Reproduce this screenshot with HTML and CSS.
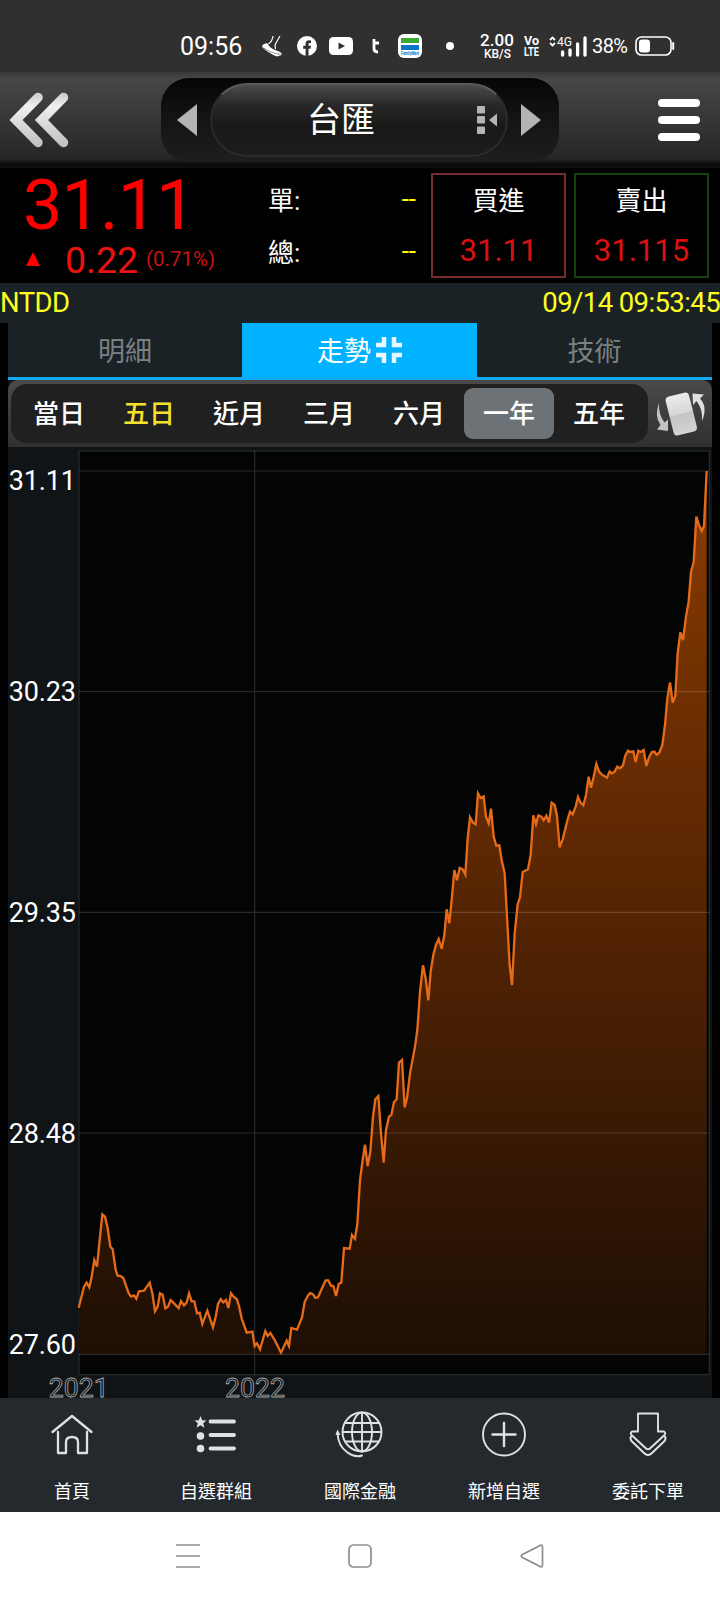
FILE: index.html
```html
<!DOCTYPE html>
<html lang="zh-Hant">
<head>
    <meta charset="UTF-8">
    <meta name="viewport" content="width=device-width, initial-scale=1.0">
    <title>台匯</title>
    <link rel="stylesheet" href="styles.css">
</head>
<body>
    <div class="status-bar">
        <span class="clock">09:56</span>
        <svg class="shoe" width="20" height="22" viewBox="0 0 20 22">
            <path d="M1 9.500 L5 8 Q8 13 12 14.500 L18 17 Q20 18 19.500 20 L15 21.500 Q6 18 0 12 Z" fill="#fff"/>
            <path d="M1 12.500 Q8 18 18.500 19.300" stroke="#777" stroke-width=".8" fill="none"/>
            <path d="M11 1 Q10.500 6 6.500 9 M18 1 Q15 6 13 10 L13.500 14" stroke="#fff" stroke-width="1.2" fill="none"/>
        </svg>
        <svg class="facebook" width="20" height="20" viewBox="0 0 20 20">
            <circle cx="10" cy="10" r="10" fill="#fff"/>
            <path d="M8.6 20 V12.8 H6.2 V9.7 H8.6 V7.8 Q8.6 4.2 12 4.2 L14 4.4 V7 H12.8 Q11.5 7 11.5 8.2 V9.7 H14 L13.5 12.8 H11.5 V20 Z" fill="#303030"/>
        </svg>
        <svg class="youtube" width="24" height="18" viewBox="0 0 24 18">
            <rect width="24" height="18" rx="4.5" fill="#fff"/>
            <path d="M9.5 5.4 L16 9 L9.5 12.6 Z" fill="#303030"/>
        </svg>
        <svg class="letter-t" width="8" height="16" viewBox="0 0 8 16">
            <path d="M2 1 V10.500 Q2 14 6 14 M2 5 H7" stroke="#fff" stroke-width="2.800" fill="none"/>
        </svg>
        <svg class="mart" width="24" height="24" viewBox="0 0 24 24">
            <rect width="24" height="24" rx="6" fill="#fff"/>
            <rect x="3" y="4" width="18" height="5" fill="#3aa935"/>
            <rect x="3" y="11" width="18" height="5" fill="#0b76c5"/>
            <text x="3" y="21.3" font-size="4.6" font-weight="700" textLength="18" lengthAdjust="spacingAndGlyphs" fill="#0b76c5">FamilyMart</text>
        </svg>
        <span class="dot"></span>
        <svg class="speed" width="34" height="26" viewBox="0 0 34 26">
            <text x="0" y="13" font-size="17" font-weight="500" textLength="34">2.00</text>
            <text x="4" y="25" font-size="12" font-weight="500" textLength="27" lengthAdjust="spacingAndGlyphs">KB/S</text>
        </svg>
        <svg class="volte" width="15" height="20" viewBox="0 0 15 20">
            <text x="0" y="9" font-size="12.500" font-weight="700" textLength="15" lengthAdjust="spacingAndGlyphs">Vo</text>
            <text x="0" y="19.500" font-size="12.500" font-weight="700" textLength="15" lengthAdjust="spacingAndGlyphs">LTE</text>
        </svg>
        <svg class="signal" width="38" height="21" viewBox="0 0 38 21">
            <path d="M1 4 L3.5 1.5 L6 4 M1 7 L3.5 9.5 L6 7" stroke="#fff" stroke-width="1.8" fill="none"/>
            <text x="8" y="10" font-size="13" textLength="15" lengthAdjust="spacingAndGlyphs">4G</text>
            <path d="M13.6 16 V19 M21 14 V19 M28.6 8 V19 M36 2 V19" stroke="#fff" stroke-width="3.300" stroke-linecap="round"/>
        </svg>
        <span class="percent">38%</span>
        <svg class="battery" width="40" height="20" viewBox="0 0 40 20">
            <rect x="1" y="1" width="35" height="18" rx="5.5" stroke="#fff" stroke-width="1.6" fill="none"/>
            <rect x="4" y="3.5" width="11" height="13" rx="3" fill="#fff"/>
            <path d="M38.2 7 V13" stroke="#fff" stroke-width="2" stroke-linecap="round"/>
        </svg>
    </div>

    <div class="toolbar">
        <svg class="back" width="60" height="56" viewBox="0 0 60 56">
            <defs>
                <linearGradient id="silver" x1="0" y1="0" x2="0" y2="56" gradientUnits="userSpaceOnUse">
                    <stop offset="0" stop-color="#c8c8c8"/>
                    <stop offset=".25" stop-color="#f0f0f0"/>
                    <stop offset="1" stop-color="#bdbdbd"/>
                </linearGradient>
            </defs>
            <path d="M28 5.500 L6 28 L28 50.500 M53.500 5.500 L31.500 28 L53.500 50.500" stroke="url(#silver)" stroke-width="9.500" stroke-linecap="round" fill="none"/>
        </svg>
        <div class="switcher">
            <svg width="20" height="32" viewBox="0 0 20 32"><path d="M20 0 V32 L0 16 Z" fill="#b4b4b4"/></svg>
            <div class="pill">
                <span>台匯</span>
                <svg class="more" width="21" height="30" viewBox="0 0 21 30">
                    <rect x="0" y="1" width="8" height="7.500" rx="1" fill="#b4b4b4"/>
                    <rect x="0" y="11" width="8" height="7.500" rx="1" fill="#b4b4b4"/>
                    <rect x="0" y="21.500" width="8" height="7.500" rx="1" fill="#b4b4b4"/>
                    <path d="M20 8.500 V21.500 L12 15 Z" fill="#b4b4b4"/>
                </svg>
            </div>
            <svg width="20" height="32" viewBox="0 0 20 32"><path d="M0 0 V32 L20 16 Z" fill="#b4b4b4"/></svg>
        </div>
        <div class="menu"><i></i><i></i><i></i></div>
    </div>

    <div class="quote">
        <div class="last">
            <div class="price">31.11</div>
            <div class="change">
                <span class="up"></span>
                <span class="diff">0.22</span>
                <span class="pct">(0.71%)</span>
            </div>
        </div>
        <div class="volume">
            <div><span>單:</span><em>--</em></div>
            <div><span>總:</span><em>--</em></div>
        </div>
        <div class="deal buy"><span>買進</span><b>31.11</b></div>
        <div class="deal sell"><span>賣出</span><b>31.115</b></div>
    </div>

    <div class="info">
        <span>NTDD</span>
        <span>09/14 09:53:45</span>
    </div>

    <div class="main">
        <div class="tabs">
            <div class="tab">明細</div>
            <div class="tab active">走勢
                <svg width="26" height="26" viewBox="0 0 26 26">
                    <path d="M8 0 V8 H0 M18 0 V8 H26 M0 18 H8 V26 M26 18 H18 V26" stroke="#e8f6ff" stroke-width="4.500" fill="none"/>
                </svg>
            </div>
            <div class="tab">技術</div>
        </div>

        <div class="period-bar">
            <div class="periods">
                <span>當日</span>
                <span class="yellow">五日</span>
                <span>近月</span>
                <span>三月</span>
                <span>六月</span>
                <span class="selected">一年</span>
                <span>五年</span>
            </div>
            <svg class="rotate" width="50" height="48" viewBox="0 0 50 48">
                <defs>
                    <linearGradient id="card" x1="0" y1="0" x2="0" y2="1">
                        <stop offset="0" stop-color="#ececec"/>
                        <stop offset=".5" stop-color="#d6d6d6"/>
                        <stop offset=".5" stop-color="#c4c4c4"/>
                        <stop offset="1" stop-color="#d4d4d4"/>
                    </linearGradient>
                </defs>
                <rect x="14.300" y="4" width="24" height="40" rx="4" transform="rotate(-14 26.300 24)" fill="url(#card)"/>
                <path d="M4 13 Q-1 26 5.500 35 L2 39.500 L13 41 L13 29.500 L9.500 32.500 Q3.500 25 4 13 Z" fill="#c4c4c4"/>
                <path d="M47 31 Q53 17 45 8.500 L49 4.500 L37.500 3.500 L38 15 L41.500 11 Q48 19 47 31 Z" fill="#e0e0e0"/>
            </svg>
        </div>

        <!-- chart units are thirds of a pixel -->
        <svg class="chart" viewBox="0 0 2112 2853">
            <defs>
                <linearGradient id="area" x1="0" y1="72" x2="0" y2="2722" gradientUnits="userSpaceOnUse">
                    <stop offset="0" stop-color="#8a3b00"/>
                    <stop offset=".5" stop-color="#552403"/>
                    <stop offset="1" stop-color="#1d0e04"/>
                </linearGradient>
            </defs>
            <rect class="plot" x="213" y="12" width="1891" height="2771"/>
            <path id="fill" fill="url(#area)"/>
            <path class="grid" d="M213 72 H2104 M213 734 H2104 M213 1396 H2104 M213 2058 H2104 M213 2722 H2104 M740 12 V2783"/>
            <polyline id="line" points="212,2582 228,2519 236,2507 244,2521 251,2489 259,2439 267,2459 274,2389 283,2302 291,2309 299,2344 307,2399 314,2407 323,2469 329,2486 338,2487 346,2493 362,2539 369,2549 378,2545 385,2555 393,2533 408,2531 425,2507 433,2539 441,2593 449,2579 456,2539 464,2543 472,2584 480,2579 488,2559 501,2572 512,2583 519,2562 528,2575 536,2567 543,2539 551,2563 559,2563 567,2599 575,2597 583,2631 598,2591 615,2641 623,2609 630,2571 638,2557 646,2566 654,2559 661,2583 669,2539 677,2549 686,2556 693,2577 701,2614 716,2657 733,2654 740,2697 747,2689 756,2707 772,2652 779,2667 787,2658 801,2681 819,2717
                836,2681 843,2697 850,2643 867,2648 882,2611 890,2565 900,2545 907,2538 915,2542 922,2553 930,2551 945,2517 953,2500 961,2500 969,2516 976,2517 984,2547 992,2511 1000,2507 1008,2403 1025,2405 1032,2364 1041,2375 1048,2331 1056,2199 1064,2139 1071,2093 1079,2157 1087,2114 1095,2009 1102,1957 1111,1947 1119,2059 1127,2147 1134,2049 1143,2009 1150,2004 1158,1965 1166,1957 1173,1847 1182,1839 1190,1981 1197,1954 1206,1879 1221,1799
                1228,1749 1236,1634 1245,1555 1253,1595 1261,1660 1268,1574 1276,1524 1284,1493 1292,1476 1301,1505 1309,1464 1316,1387 1324,1429 1332,1349 1339,1269 1347,1300 1355,1263 1364,1267 1372,1283 1379,1174 1386,1111 1395,1127 1403,1132 1410,1039 1418,1053 1427,1048 1434,1109 1442,1129 1449,1085 1457,1169 1465,1196 1474,1195 1481,1239 1490,1279 1497,1409 1505,1554 1512,1614 1520,1459 1529,1372 1536,1351 1544,1275 1560,1267 1568,1224 1576,1105 1584,1131 1591,1105 1600,1109 1607,1120 1615,1106 1623,1127 1631,1067 1640,1074 1647,1107 1655,1201
                1664,1177 1679,1117 1686,1094 1694,1102 1703,1079 1710,1050 1717,1066 1726,1075 1734,1044 1742,989 1749,1022 1757,989 1765,951 1773,974 1782,983 1797,992 1805,973 1812,979 1820,974 1828,959 1836,964 1845,955 1852,926 1860,911 1867,915 1876,913 1883,945 1891,911 1899,915 1907,909 1915,957 1923,931 1931,916 1939,914 1946,923 1954,917 1963,894 1971,834 1978,754 1986,706 1994,767 2002,746
                2009,619 2017,556 2025,579 2034,509 2042,464 2049,374 2057,346 2065,209 2073,234 2081,252 2088,237 2096,72"/>
            <g class="prices">
                <text x="203" y="130">31.11</text>
                <text x="203" y="763">30.23</text>
                <text x="203" y="1426">29.35</text>
                <text x="203" y="2087">28.48</text>
                <text x="203" y="2720">27.60</text>
            </g>
            <g class="years">
                <text x="212" y="2851">2021</text>
                <text x="741" y="2851">2022</text>
            </g>
        </svg>
    </div>

    <div class="bottom-nav">
        <div class="item">
            <svg width="48" height="48" viewBox="0 0 48 48">
                <path d="M4.500 21 L24 5 L43.500 21 M10 21 V42 H18 V31 Q18 26 24 26 Q30 26 30 31 V42 H39 V21" stroke-width="2.300"/>
            </svg>
            <span>首頁</span>
        </div>
        <div class="item">
            <svg width="48" height="48" viewBox="0 0 48 48">
                <path class="solid" d="M8.500 5 L10.200 9.200 L14.500 9.400 L11.200 12.200 L12.500 16.800 L8.500 14.200 L4.500 16.800 L5.800 12.200 L2.500 9.400 L6.800 9.200 Z"/>
                <circle class="solid" cx="8.500" cy="25" r="3.800"/>
                <circle class="solid" cx="8.500" cy="37.500" r="3.800"/>
                <path d="M18.500 10.500 H42 M18.500 24 H42 M18.500 37.500 H42" stroke-width="3.800"/>
            </svg>
            <span>自選群組</span>
        </div>
        <div class="item">
            <svg width="48" height="48" viewBox="0 0 48 48">
                <circle cx="26" cy="21" r="19.500"/>
                <ellipse cx="26" cy="21" rx="10" ry="19.500"/>
                <path d="M26 2 V40 M7 21 H45 M9.500 12 H42.500 M9.500 30.500 H42.500 M1.500 22 Q2 35 11.500 41.500 Q19 47 26 44.500"/>
                <path class="solid" d="M1.500 18.500 L4.500 24 H-.5 Z"/>
            </svg>
            <span>國際金融</span>
        </div>
        <div class="item">
            <svg width="48" height="48" viewBox="0 0 48 48">
                <circle cx="24" cy="23.500" r="21"/>
                <path d="M12.500 23.500 H35.500 M24 12 V35" stroke-width="2.400"/>
            </svg>
            <span>新增自選</span>
        </div>
        <div class="item">
            <svg width="48" height="48" viewBox="0 0 48 48">
                <path d="M14 2.500 H34 V20.500 H40 Q42.500 22 40 24.500 L26.500 37 Q24 39.500 21.500 37 L8 24.500 Q5.500 22 8 20.500 H14 Z"/>
                <path d="M7 25.500 Q5.500 28 8 30.500 L20 42 Q24 46 28 42 L40 30.500 Q42.500 28 41 25.500"/>
            </svg>
            <span>委託下單</span>
        </div>
    </div>

    <div class="system-nav">
        <svg width="24" height="24" viewBox="0 0 24 24"><path d="M0 1 H24 M0 12 H24 M0 23 H24"/></svg>
        <svg width="24" height="24" viewBox="0 0 24 24"><rect x="1" y="1" width="22" height="22" rx="4.500"/></svg>
        <svg width="24" height="24" viewBox="0 0 24 24"><path d="M20.500 1.300 L2 10.800 Q.4 12 2 13.200 L20.500 22.700 Q22.500 23.300 22.500 21 V3 Q22.500 .7 20.500 1.300 Z"/></svg>
    </div>

    <script>
        // Close the price line down to the base line for the shaded area
        const points = document.getElementById('line').getAttribute('points').trim();
        document.getElementById('fill').setAttribute('d', 'M212 2722 L' + points + ' V2722 Z');
    </script>
</body>
</html>
```

FILE: styles.css
```css
* {
    box-sizing: border-box;
}

body {
    margin: 0;
    width: 720px;
    height: 1600px;
    background: #000;
    color: #fff;
    font-family: Roboto, "Noto Sans CJK TC", sans-serif;
}

svg {
    display: block;
    flex-shrink: 0;
    overflow: visible;
}

/* phone status bar */
.status-bar {
    height: 72px;
    padding: 20px 0 0 180px;
    background: #303030;
    display: flex;
    align-items: center;
}

.status-bar text {
    fill: #fff;
}

.mart text {
    fill: #0b76c5;
}

.clock {
    width: 82px;
    font-size: 25px;
}

.facebook {
    margin-left: 15px;
}

.youtube {
    margin-left: 12px;
}

.letter-t {
    margin-left: 19px;
}

.mart {
    margin-left: 18px;
}

.dot {
    width: 8px;
    height: 8px;
    margin-left: 24px;
    border-radius: 50%;
    background: #fff;
}

.speed {
    margin-left: 26px;
}

.volte {
    margin-left: 10px;
}

.signal {
    margin-left: 10px;
}

.percent {
    width: 38px;
    margin-left: 5px;
    font-size: 20px;
    letter-spacing: -0.6px;
    white-space: nowrap;
}

.battery {
    margin-left: 5px;
}

/* title bar */
.toolbar {
    height: 96px;
    padding: 0 20px 0 10px;
    display: flex;
    align-items: center;
    background: linear-gradient(#3a3a3a, #474747 8%, #262626 90%, #080808 97%, #111);
}

.switcher {
    width: 398px;
    height: 84px;
    margin-left: 91px;
    padding: 0 18px 0 16px;
    display: flex;
    align-items: center;
    justify-content: space-between;
    border-radius: 28px;
    background: linear-gradient(#060606, #141414 50%, #1e1e1e);
}

.pill {
    width: 298px;
    height: 74px;
    display: flex;
    align-items: center;
    justify-content: flex-end;
    border-radius: 37px;
    border: 2px solid #2b2b2b;
    border-top-color: #5a5a5a;
    background: linear-gradient(#4c4c4c, #282828 28%, #191919 60%, #1c1c1c);
    font-size: 34px;
}

.pill span {
    margin-right: 102px;
    line-height: 1;
}

.more {
    margin-right: 8px;
}

.menu {
    width: 42px;
    margin-left: auto;
    display: flex;
    flex-direction: column;
    gap: 9px;
}

.menu i {
    height: 8px;
    border-radius: 4px;
    background: #fff;
}

/* quote */
.quote {
    height: 115px;
    padding-right: 11px;
    display: flex;
    align-items: center;
}

.last {
    width: 268px;
    height: 115px;
    color: #f00;
}

.price {
    height: 72px;
    padding: 3px 0 0 23px;
    font-size: 70px;
    line-height: 69px;
    letter-spacing: -0.8px;
}

.change {
    padding-left: 26px;
    display: flex;
    align-items: baseline;
    line-height: 41px;
}

.up {
    margin-right: 25px;
    border: 7.5px solid transparent;
    border-top: 0;
    border-bottom: 14px solid #f00;
    position: relative;
    top: -7px;
}

.diff {
    width: 81px;
    font-size: 37.5px;
    color: #ec1111;
}

.pct {
    font-size: 20.5px;
    color: #c81414;
    position: relative;
    top: -7px;
}

.volume {
    width: 148px;
    margin: -2px 15px 0 0;
    font-size: 26px;
}

.volume div {
    height: 52px;
    display: flex;
    align-items: center;
    justify-content: space-between;
}

.volume em {
    font-style: normal;
    color: #ffff00;
}

.deal {
    width: 135px;
    height: 105px;
    padding-top: 1px;
    border: 2px solid #762c2c;
    display: flex;
    flex-direction: column;
    align-items: center;
    font-size: 26px;
}

.deal span {
    line-height: 50px;
}

.deal b {
    font-size: 31px;
    font-weight: 400;
    line-height: 50px;
    color: #dd1010;
}

.sell {
    margin-left: 8px;
    border-color: #173f12;
}

.info {
    height: 40px;
    display: flex;
    justify-content: space-between;
    background: #1b2225;
    color: #ffff22;
    font-size: 27.5px;
    line-height: 39px;
    letter-spacing: -0.6px;
}

/* tabs and chart */
.main {
    margin: 0 8px;
    height: 1075px;
    background: #101417;
}

.tabs {
    height: 57px;
    display: grid;
    grid-template-columns: 234px 235px 235px;
    background: #1b2225;
    border-bottom: 3px solid #12aaf0;
}

.tab {
    padding-bottom: 1px;
    display: flex;
    align-items: center;
    justify-content: center;
    gap: 5px;
    color: #7b8183;
    font-size: 27px;
}

.tab.active {
    background: #00b2ff;
    color: #fff;
}

.period-bar {
    height: 67px;
    padding-left: 3px;
    display: flex;
    align-items: center;
    border-radius: 10px 10px 0 0;
    background: linear-gradient(#4a4a4a, #303030);
}

.periods {
    width: 637px;
    height: 59px;
    padding-left: 3px;
    display: grid;
    grid-template-columns: repeat(7, 90px);
    align-items: center;
    border-radius: 16px;
    background: #202020;
    font-size: 26px;
    font-weight: 500;
    text-align: center;
}

.periods span {
    height: 51px;
    padding-top: 2px;
    line-height: 49px;
    border-radius: 9px;
}

.periods .yellow {
    color: #f5e02c;
}

.periods .selected {
    background: #6d7276;
}

.rotate {
    margin-left: 7px;
}

.chart {
    width: 704px;
    height: 951px;
}

.plot {
    fill: #030504;
    stroke: #262929;
    stroke-width: 4;
}

.grid {
    fill: none;
    stroke: #fff;
    stroke-opacity: 0.15;
    stroke-width: 3.5;
}

#line {
    fill: none;
    stroke: #e56b18;
    stroke-width: 7;
}

.prices text {
    fill: #fff;
    font-size: 81px;
    letter-spacing: -0.5px;
    text-anchor: end;
}

.years text {
    fill: #101417;
    stroke: #a5a7a8;
    stroke-width: 2.5;
    font-size: 80px;
    text-anchor: middle;
}

/* app navigation */
.bottom-nav {
    height: 114px;
    display: grid;
    grid-template-columns: repeat(5, 1fr);
    background: #24292d;
}

.item {
    padding-top: 13px;
    display: flex;
    flex-direction: column;
    align-items: center;
    font-size: 18px;
}

.item span {
    margin-top: 19px;
    line-height: 28px;
}

.item svg {
    fill: none;
    stroke: #dfe1e2;
    stroke-width: 1.9;
    stroke-linecap: round;
    stroke-linejoin: round;
}

.item .solid {
    fill: #dfe1e2;
    stroke: none;
}

.system-nav {
    height: 88px;
    padding: 0 176px;
    display: flex;
    align-items: center;
    justify-content: space-between;
    background: #fff;
}

.system-nav svg {
    fill: none;
    stroke: #8d8d8d;
    stroke-width: 1.7;
}
```
